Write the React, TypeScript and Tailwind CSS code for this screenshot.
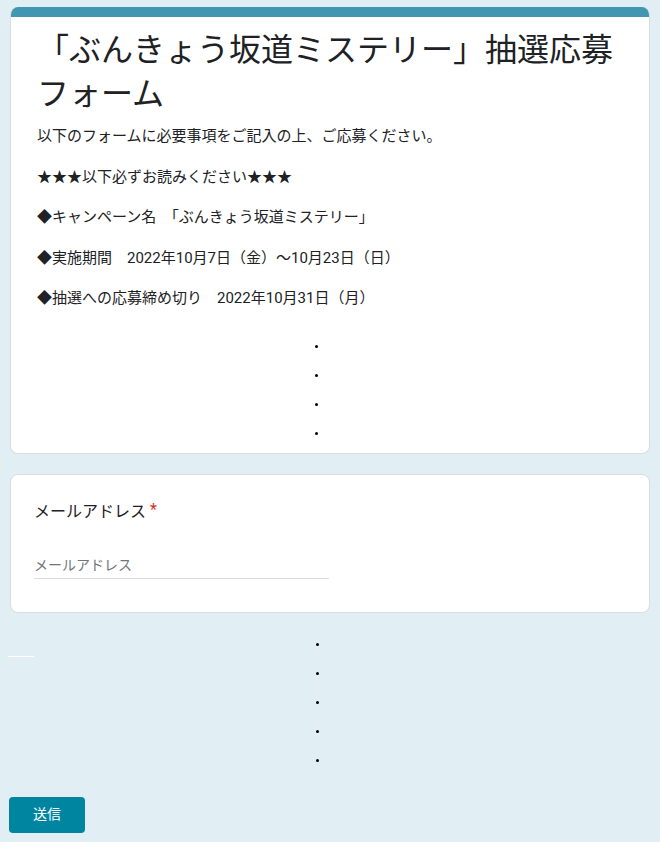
import React from "react";

const font = { fontFamily: "Roboto, 'Noto Sans CJK JP', sans-serif" };

function Dot() {
  return (
    <div className="h-[29px] flex items-center">
      <div className="w-[3px] h-[3px] rounded-full bg-black" />
    </div>
  );
}

export default function App() {
  const lines = [
    "以下のフォームに必要事項をご記入の上、ご応募ください。",
    "★★★以下必ずお読みください★★★",
    "◆キャンペーン名　「ぶんきょう坂道ミステリー」",
    "◆実施期間　2022年10月7日（金）～10月23日（日）",
    "◆抽選への応募締め切り　2022年10月31日（月）",
  ];
  return (
    <div className="min-h-[842px] w-[660px] bg-[#e1eef3] pt-[7px] px-[10px] pb-[9px] text-[#202124]" style={font}>
      {/* Header card */}
      <div className="rounded-[8px] bg-white border border-[#dadce0] border-t-0 overflow-hidden">
        <div className="h-[10px] bg-[#4197b1]" />
        <div className="pl-[26px] pr-[24px] pt-[11px] pb-[5px]">
          <h1 className="text-[32px] leading-[44px] font-normal">
            「ぶんきょう坂道ミステリー」抽選応募フォーム
          </h1>
          <div className="mt-[10px] flex flex-col gap-[20px] text-[15px] leading-[20.5px]">
            {lines.map((l) => (
              <p key={l}>{l}</p>
            ))}
          </div>
          <div className="mt-[23px] pl-[278px] flex flex-col">
            <Dot />
            <Dot />
            <Dot />
            <Dot />
          </div>
        </div>
      </div>

      {/* Email card */}
      <div className="mt-[20px] rounded-[8px] bg-white border border-[#dadce0] pl-[23px] pr-[24px] pt-[25px] pb-[33px]">
        <div className="text-[16px] leading-[24px] flex items-start">
          <span>メールアドレス</span>
          <span className="text-[#d93025] ml-[4px] text-[16px] leading-[20px]">*</span>
        </div>
        <div className="mt-[31px] w-[295px] border-b border-[#dadce0] pb-[3px]">
          <div className="text-[14px] leading-[20px] text-[#70757a]">メールアドレス</div>
        </div>
      </div>

      {/* Lower area */}
      <div className="relative mt-[17px]">
        <div className="absolute left-[-2px] top-[26px] w-[26px] h-[1px] bg-white" />
        <div className="pl-[306px] flex flex-col">
          <Dot />
          <Dot />
          <Dot />
          <Dot />
          <Dot />
        </div>
      </div>

      <div className="mt-[22px]">
        <button className="w-[76px] h-[36px] rounded-[4px] bg-[#0085a1] text-white text-[14px] ml-[-1px]">
          送信
        </button>
      </div>
    </div>
  );
}
